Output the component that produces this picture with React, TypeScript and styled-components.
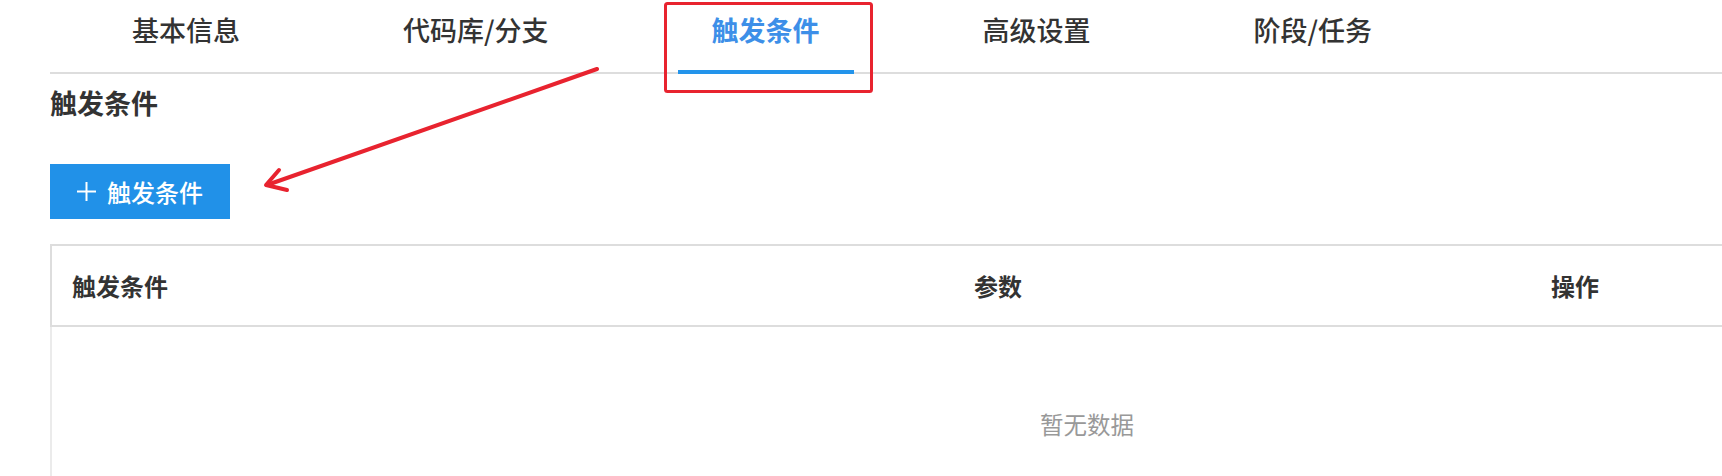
import React from "react";
import styled, { createGlobalStyle } from "styled-components";

const GlobalStyle = createGlobalStyle`
  html, body {
    margin: 0;
    padding: 0;
    background: #ffffff;
    overflow: hidden;
  }
  body {
    font-family: "Noto Sans CJK SC", "Noto Sans", "Liberation Sans", sans-serif;
    color: #333333;
  }
`;

const Page = styled.div`
  position: relative;
  width: 1722px;
  height: 476px;
  overflow: hidden;
  padding-left: 50px;
  box-sizing: border-box;
`;

const TabNav = styled.nav`
  display: flex;
  gap: 95px;
  height: 74px;
  box-sizing: border-box;
  padding-left: 48px;
  border-bottom: 2px solid #dddddd;
`;

const Tab = styled.div<{ $active?: boolean }>`
  position: relative;
  padding: 14px 34px 0;
  font-size: 27px;
  line-height: 32px;
  white-space: nowrap;
  color: ${(p) => (p.$active ? "#3d8fe8" : "#333333")};
  font-weight: ${(p) => (p.$active ? 700 : 500)};

  &::after {
    content: "";
    display: ${(p) => (p.$active ? "block" : "none")};
    position: absolute;
    left: 0;
    right: 0;
    bottom: -2px;
    height: 4px;
    background: #2394eb;
  }
`;

const SectionTitle = styled.h2`
  margin: 13px 0 0;
  font-size: 27px;
  line-height: 32px;
  font-weight: 700;
  color: #333333;
`;

const AddButton = styled.button`
  display: flex;
  align-items: center;
  gap: 11px;
  margin-top: 45px;
  width: 180px;
  height: 55px;
  padding: 0 0 0 27px;
  border: none;
  border-radius: 0;
  background: #2191e8;
  color: #ffffff;
  font-family: inherit;
  font-size: 24px;
  font-weight: 500;
  line-height: 30px;
  cursor: pointer;
`;

const Table = styled.div`
  margin-top: 25px;
  width: 2072px;
`;

const HeaderRow = styled.div`
  display: grid;
  grid-template-columns: 902px 577px 1fr;
  height: 83px;
  box-sizing: border-box;
  border-top: 2px solid #dddddd;
  border-left: 2px solid #dddddd;
  border-bottom: 2px solid #dddddd;
`;

const HeaderCell = styled.div`
  display: flex;
  align-items: center;
  padding-left: 20px;
  font-size: 24px;
  font-weight: 700;
  color: #333333;
`;

const EmptyBody = styled.div`
  height: 200px;
  box-sizing: border-box;
  border-left: 2px solid #ebebeb;
  display: flex;
  justify-content: center;
  padding-top: 81px;
`;

const EmptyText = styled.span`
  font-size: 23.5px;
  line-height: 32px;
  color: #999999;
`;

const Annotation = styled.svg`
  position: absolute;
  left: 0;
  top: 0;
  pointer-events: none;
`;

const tabs = ["基本信息", "代码库/分支", "触发条件", "高级设置", "阶段/任务"];

export default function App() {
  return (
    <>
      <GlobalStyle />
      <Page>
        <TabNav>
          {tabs.map((t, i) => (
            <Tab key={t} $active={i === 2}>
              {t}
            </Tab>
          ))}
        </TabNav>
        <SectionTitle>触发条件</SectionTitle>
        <AddButton>
          <svg width="19" height="19" viewBox="0 0 19 19">
            <line x1="9.5" y1="0" x2="9.5" y2="19" stroke="#fff" strokeWidth="2" />
            <line x1="0" y1="9.5" x2="19" y2="9.5" stroke="#fff" strokeWidth="2" />
          </svg>
          <span>触发条件</span>
        </AddButton>
        <Table>
          <HeaderRow>
            <HeaderCell>触发条件</HeaderCell>
            <HeaderCell>参数</HeaderCell>
            <HeaderCell>操作</HeaderCell>
          </HeaderRow>
          <EmptyBody>
            <EmptyText>暂无数据</EmptyText>
          </EmptyBody>
        </Table>
        <Annotation width="1722" height="476" viewBox="0 0 1722 476">
          <rect
            x="665.5"
            y="3.5"
            width="206"
            height="88"
            rx="2"
            fill="none"
            stroke="#e8232f"
            strokeWidth="3"
          />
          <g stroke="#e8232f" strokeWidth="4" strokeLinecap="round" strokeLinejoin="round" fill="none">
            <line x1="597" y1="69" x2="267" y2="185" />
            <polyline points="279,170 266,185 287,190" />
          </g>
        </Annotation>
      </Page>
    </>
  );
}
